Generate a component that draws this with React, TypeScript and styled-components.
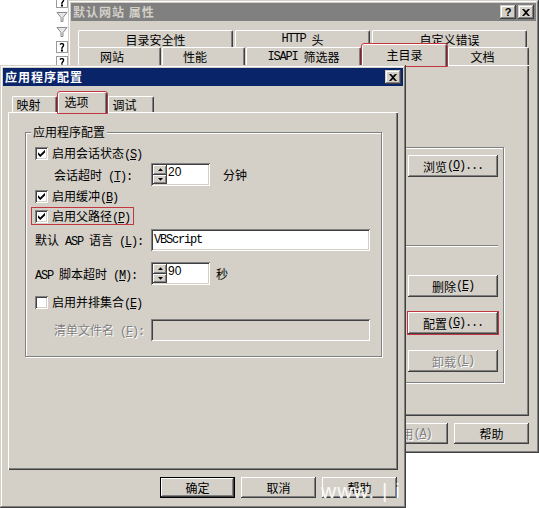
import React from "react";
import styled, { createGlobalStyle, css } from "styled-components";

const FACE = "#d4d0c8";
const RED = "#c23642";

const GlobalStyle = createGlobalStyle`
  html, body { margin: 0; padding: 0; background: #ffffff; }
  body {
    font-family: "Noto Sans CJK SC", "Liberation Sans", sans-serif;
    font-size: 12px;
    color: #000000;
  }
  u { text-decoration-thickness: 1px; text-underline-offset: 1px; }
`;

const raised = css`
  box-shadow: inset -1px -1px #404040, inset 1px 1px #ffffff, inset -2px -2px #808080;
`;
const sunken = css`
  box-shadow: inset 1px 1px #808080, inset -1px -1px #ffffff, inset 2px 2px #404040,
    inset -2px -2px ${FACE};
`;

const Desktop = styled.div`
  position: relative;
  width: 539px;
  height: 508px;
  overflow: hidden;
  background: #ffffff;
`;

const TreeStrip = styled.div`
  position: absolute;
  left: 56px;
  top: -4px;
  display: flex;
  flex-direction: column;
  gap: 3px;
`;

const Lat = styled.span`
  font-family: "Liberation Mono", "DejaVu Sans Mono", monospace;
  font-size: 12px;
  letter-spacing: -1.2px;
  white-space: pre;
`;

const Window = styled.div<{ $x: number; $y: number; $w: number; $h: number; $z: number }>`
  position: absolute;
  left: ${(p) => p.$x}px;
  top: ${(p) => p.$y}px;
  width: ${(p) => p.$w}px;
  height: ${(p) => p.$h}px;
  z-index: ${(p) => p.$z};
  box-sizing: border-box;
  padding: 3px;
  background: ${FACE};
  box-shadow: inset -1px -1px #404040, inset 1px 1px ${FACE}, inset -2px -2px #808080,
    inset 2px 2px #ffffff;
  display: flex;
  flex-direction: column;
`;

const TitleBar = styled.div<{ $active: boolean }>`
  flex: none;
  height: 18px;
  display: flex;
  align-items: center;
  gap: 2px;
  padding: 0 2px;
  background: ${(p) => (p.$active ? "#0a246a" : "#808080")};
  color: ${(p) => (p.$active ? "#ffffff" : FACE)};
  font-weight: 700;
  font-size: 12px;
`;

const TitleText = styled.span`
  flex: 1;
  white-space: nowrap;
  letter-spacing: 1px;
  line-height: 18px;
`;

const CaptionButton = styled.div`
  flex: none;
  width: 16px;
  height: 14px;
  box-sizing: border-box;
  background: ${FACE};
  box-shadow: inset -1px -1px #404040, inset 1px 1px ${FACE}, inset -2px -2px #808080,
    inset 2px 2px #ffffff;
  display: flex;
  align-items: center;
  justify-content: center;
  color: #000000;
  font-family: "Liberation Sans", sans-serif;
  font-weight: 700;
  font-size: 11px;
  line-height: 1;
`;

const TabArea = styled.div`
  flex: none;
  display: flex;
  flex-direction: column;
  padding: 9px 0 0 7px;
`;

const TabRow = styled.div<{ $h: number; $gap: number; $pl?: number }>`
  flex: none;
  height: ${(p) => p.$h}px;
  display: flex;
  align-items: flex-end;
  gap: ${(p) => p.$gap}px;
  padding-left: ${(p) => p.$pl ?? 0}px;
`;

const Tab = styled.div<{ $w: number; $h: number; $sel?: boolean; $hl?: boolean; $pr?: number }>`
  flex: none;
  box-sizing: border-box;
  width: ${(p) => p.$w}px;
  height: ${(p) => p.$h}px;
  background: ${FACE};
  border-top: 1px solid #ffffff;
  border-left: 1px solid #ffffff;
  border-right: 1px solid #404040;
  border-radius: 2px 2px 0 0;
  box-shadow: inset -1px 0 #808080;
  display: flex;
  align-items: center;
  justify-content: center;
  padding-right: ${(p) => p.$pr ?? 0}px;
  white-space: nowrap;
  ${(p) =>
    p.$sel &&
    css`
      position: relative;
      z-index: 2;
      margin-bottom: -1px;
      padding-bottom: 3px;
    `}
  ${(p) =>
    p.$hl &&
    css`
      outline: 1px solid ${RED};
    `}
`;

const Panel = styled.div<{ $h: number; $ml: number; $mr: number }>`
  flex: none;
  height: ${(p) => p.$h}px;
  margin: 0 ${(p) => p.$mr}px 0 ${(p) => p.$ml}px;
  box-sizing: border-box;
  background: ${FACE};
  box-shadow: inset 1px 1px #ffffff, inset -1px -1px #404040, inset -2px -2px #808080;
  display: flex;
  flex-direction: column;
`;

const OuterGroup = styled.div`
  margin: 82px 25px 0 10px;
  height: 236px;
  box-sizing: border-box;
  border: 1px solid #808080;
  box-shadow: 1px 1px 0 #ffffff, inset 1px 1px 0 #ffffff;
  display: flex;
  flex-direction: column;
  align-items: flex-end;
  padding: 7px 5px 0 0;
`;

const Separator = styled.div<{ $mt: number }>`
  width: 100px;
  margin-top: ${(p) => p.$mt}px;
  border-top: 1px solid #808080;
  border-bottom: 1px solid #ffffff;
`;

const Button = styled.div<{
  $w: number;
  $h: number;
  $mt?: number;
  $def?: boolean;
  $off?: boolean;
  $hl?: boolean;
}>`
  flex: none;
  box-sizing: border-box;
  width: ${(p) => p.$w}px;
  height: ${(p) => p.$h}px;
  margin-top: ${(p) => p.$mt ?? 0}px;
  background: ${FACE};
  ${(p) =>
    p.$def
      ? css`
          box-shadow: inset 0 0 0 1px #000000, inset -2px -2px #404040, inset 2px 2px #ffffff,
            inset -3px -3px #808080;
        `
      : raised}
  display: flex;
  align-items: center;
  justify-content: center;
  white-space: nowrap;
  color: ${(p) => (p.$off ? "#808080" : "#000000")};
  text-shadow: ${(p) => (p.$off ? "1px 1px 0 #ffffff" : "none")};
  ${(p) =>
    p.$hl &&
    css`
      outline: 1px solid ${RED};
    `}
`;

const ButtonRow = styled.div<{ $pr: number }>`
  flex: none;
  display: flex;
  justify-content: flex-end;
  gap: 6px;
  margin-top: 7px;
  padding-right: ${(p) => p.$pr}px;
`;

const Group = styled.div`
  position: relative;
  margin: 20px 16px 0 17px;
  border: 1px solid #808080;
  box-shadow: 1px 1px 0 #ffffff, inset 1px 1px 0 #ffffff;
  padding: 12px 0 15px 9px;
  display: flex;
  flex-direction: column;
`;

const GroupLabel = styled.span`
  position: absolute;
  top: -9px;
  left: 5px;
  padding: 0 2px;
  line-height: 16px;
  background: ${FACE};
  white-space: nowrap;
`;

const CheckRow = styled.div<{ $mt: number; $hl?: boolean }>`
  align-self: flex-start;
  display: flex;
  align-items: center;
  gap: 4px;
  height: 16px;
  margin-top: ${(p) => p.$mt}px;
  white-space: nowrap;
  ${(p) =>
    p.$hl &&
    css`
      padding: 0 3px;
      margin-left: -3px;
      outline: 1px solid ${RED};
    `}
`;

const Box = styled.span`
  flex: none;
  width: 13px;
  height: 13px;
  box-sizing: border-box;
  background: #ffffff;
  ${sunken}
  display: flex;
  align-items: center;
  justify-content: center;
`;

const FieldRow = styled.div<{ $mt: number; $h: number }>`
  display: flex;
  align-items: center;
  height: ${(p) => p.$h}px;
  margin-top: ${(p) => p.$mt}px;
`;

const FieldLabel = styled.span<{ $indent?: boolean; $off?: boolean }>`
  flex: none;
  box-sizing: border-box;
  width: 116px;
  padding-left: ${(p) => (p.$indent ? 19 : 0)}px;
  white-space: nowrap;
  color: ${(p) => (p.$off ? "#808080" : "#000000")};
  text-shadow: ${(p) => (p.$off ? "1px 1px 0 #ffffff" : "none")};
`;

const SpinBox = styled.div`
  flex: none;
  box-sizing: border-box;
  width: 59px;
  height: 23px;
  padding: 2px;
  background: #ffffff;
  ${sunken}
  display: flex;
  align-items: center;
`;

const SpinButtons = styled.div`
  flex: none;
  width: 14px;
  height: 19px;
  display: flex;
  flex-direction: column;
`;

const SpinBtn = styled.div`
  flex: 1;
  background: ${FACE};
  ${raised}
  display: flex;
  align-items: center;
  justify-content: center;
`;

const SpinValue = styled.span`
  padding-left: 1px;
  font-family: "Liberation Sans", Arial, sans-serif;
  font-size: 12px;
  align-self: flex-start;
  line-height: 15px;
`;

const Unit = styled.span<{ $ml: number }>`
  margin-left: ${(p) => p.$ml}px;
  white-space: nowrap;
`;

const TextBox = styled.div<{ $off?: boolean }>`
  flex: none;
  box-sizing: border-box;
  width: 219px;
  height: 22px;
  padding: 0 3px;
  background: ${(p) => (p.$off ? FACE : "#ffffff")};
  ${sunken}
  display: flex;
  align-items: center;
`;

const Watermark = styled.div`
  position: absolute;
  left: 321px;
  top: 479px;
  z-index: 5;
  color: rgba(255, 255, 255, 0.92);
  font-family: "Liberation Sans", Arial, sans-serif;
  font-size: 21px;
  letter-spacing: 1px;
  white-space: nowrap;
`;

const Mn = ({ k, tail = "" }: { k: string; tail?: string }) => (
  <Lat>
    (<u>{k}</u>){tail}
  </Lat>
);

const CloseGlyph = () => (
  <svg width="8" height="7" viewBox="0 0 8 7">
    <path d="M0 0h2l2 2 2-2h2L5 3.5 8 7H6L4 5 2 7H0l3-3.5z" fill="#000" />
  </svg>
);

const CheckMark = () => (
  <svg width="7" height="7" viewBox="0 0 7 7">
    <polygon points="0,2.2 2.3,4.4 7,-0.2 7,2.4 2.3,7 0,4.7" fill="#000" />
  </svg>
);

const Arrow = ({ up }: { up?: boolean }) => (
  <svg width="5" height="3" viewBox="0 0 5 3">
    <polygon points={up ? "0,3 2.5,0.3 5,3" : "0,0 2.5,2.7 5,0"} fill="#000" />
  </svg>
);

const Funnel = () => (
  <svg width="12" height="12" viewBox="0 0 12 12">
    <path d="M1 1.5h10L7 6.5v4H5v-4z" fill="#e6e6e6" stroke="#8c8c8c" strokeWidth="1" />
  </svg>
);

const PageIcon = () => (
  <svg width="12" height="12" viewBox="0 0 12 12">
    <rect x="0.5" y="0.5" width="11" height="11" fill="#ffffff" stroke="#9a9a9a" />
    <path d="M4 3.5c1-1.5 4-1 3.5 1S5.5 6 6 8" stroke="#000" strokeWidth="1.4" fill="none" />
    <rect x="5" y="8.5" width="2" height="2" fill="#000" />
  </svg>
);

const Check = ({ on }: { on?: boolean }) => <Box>{on && <CheckMark />}</Box>;

const Spinner = ({ value }: { value: string }) => (
  <SpinBox>
    <SpinButtons>
      <SpinBtn>
        <Arrow up />
      </SpinBtn>
      <SpinBtn>
        <Arrow />
      </SpinBtn>
    </SpinButtons>
    <SpinValue>{value}</SpinValue>
  </SpinBox>
);

export default function App() {
  return (
    <>
      <GlobalStyle />
      <Desktop>
        <TreeStrip>
          <PageIcon />
          <Funnel />
          <Funnel />
          <PageIcon />
          <PageIcon />
        </TreeStrip>

        <Window $x={68} $y={0} $w={471} $h={453} $z={1}>
          <TitleBar $active={false}>
            <TitleText>默认网站 属性</TitleText>
            <CaptionButton>?</CaptionButton>
            <CaptionButton>
              <CloseGlyph />
            </CaptionButton>
          </TitleBar>
          <TabArea>
            <TabRow $h={17} $gap={2}>
              <Tab $w={155} $h={17}>
                目录安全性
              </Tab>
              <Tab $w={135} $h={17}>
                <Lat>HTTP </Lat>头
              </Tab>
              <Tab $w={155} $h={17}>
                自定义错误
              </Tab>
            </TabRow>
            <TabRow $h={18} $gap={1}>
              <Tab $w={83} $h={18} $pr={15}>
                网站
              </Tab>
              <Tab $w={83} $h={18} $pr={17}>
                性能
              </Tab>
              <Tab $w={115} $h={18}>
                <Lat>ISAPI </Lat>筛选器
              </Tab>
              <Tab $w={85} $h={22} $sel $hl>
                主目录
              </Tab>
              <Tab $w={81} $h={18} $pr={12}>
                文档
              </Tab>
            </TabRow>
          </TabArea>
          <Panel $h={351} $ml={5} $mr={7}>
            <OuterGroup>
              <Button $w={90} $h={22}>
                浏览<Mn k="O" tail="..." />
              </Button>
              <Separator $mt={68} />
              <Button $w={90} $h={22} $mt={28}>
                删除<Mn k="E" />
              </Button>
              <Button $w={90} $h={22} $mt={15} $hl>
                配置<Mn k="G" tail="..." />
              </Button>
              <Button $w={90} $h={22} $mt={16} $off>
                卸载<Mn k="L" />
              </Button>
            </OuterGroup>
          </Panel>
          <ButtonRow $pr={7}>
            <Button $w={75} $h={21} $def>
              确定
            </Button>
            <Button $w={75} $h={21}>
              取消
            </Button>
            <Button $w={75} $h={21} $off>
              应用<Mn k="A" />
            </Button>
            <Button $w={75} $h={21}>
              帮助
            </Button>
          </ButtonRow>
        </Window>

        <Window $x={0} $y={65} $w={406} $h={443} $z={2}>
          <TitleBar $active>
            <TitleText>应用程序配置</TitleText>
            <CaptionButton>
              <CloseGlyph />
            </CaptionButton>
          </TitleBar>
          <TabRow $h={26} $gap={1} $pl={9}>
            <Tab $w={45} $h={16} $pr={12}>
              映射
            </Tab>
            <Tab $w={49} $h={21} $sel $hl $pr={12}>
              选项
            </Tab>
            <Tab $w={46} $h={16} $pr={13}>
              调试
            </Tab>
          </TabRow>
          <Panel $h={358} $ml={5} $mr={5}>
            <Group>
              <GroupLabel>应用程序配置</GroupLabel>
              <CheckRow $mt={0}>
                <Check on />
                <span>
                  启用会话状态<Mn k="S" />
                </span>
              </CheckRow>
              <FieldRow $mt={2} $h={23}>
                <FieldLabel $indent>
                  会话超时<Lat> </Lat>
                  <Mn k="T" tail=":" />
                </FieldLabel>
                <Spinner value="20" />
                <Unit $ml={13}>分钟</Unit>
              </FieldRow>
              <CheckRow $mt={2}>
                <Check on />
                <span>
                  启用缓冲<Mn k="B" />
                </span>
              </CheckRow>
              <CheckRow $mt={4} $hl>
                <Check on />
                <span>
                  启用父路径<Mn k="P" />
                </span>
              </CheckRow>
              <FieldRow $mt={5} $h={22}>
                <FieldLabel>
                  默认<Lat> ASP </Lat>语言<Lat> </Lat>
                  <Mn k="L" tail=":" />
                </FieldLabel>
                <TextBox>
                  <Lat>VBScript</Lat>
                </TextBox>
              </FieldRow>
              <FieldRow $mt={11} $h={23}>
                <FieldLabel>
                  <Lat>ASP </Lat>脚本超时<Lat> </Lat>
                  <Mn k="M" tail=":" />
                </FieldLabel>
                <Spinner value="90" />
                <Unit $ml={6}>秒</Unit>
              </FieldRow>
              <CheckRow $mt={9}>
                <Check />
                <span>
                  启用并排集合<Mn k="E" />
                </span>
              </CheckRow>
              <FieldRow $mt={9} $h={22}>
                <FieldLabel $indent $off>
                  清单文件名<Lat> </Lat>
                  <Mn k="F" tail=":" />
                </FieldLabel>
                <TextBox $off />
              </FieldRow>
            </Group>
          </Panel>
          <ButtonRow $pr={6}>
            <Button $w={75} $h={21} $def>
              确定
            </Button>
            <Button $w={75} $h={21}>
              取消
            </Button>
            <Button $w={75} $h={21}>
              帮助
            </Button>
          </ButtonRow>
        </Window>

        <Watermark>www. | i</Watermark>
      </Desktop>
    </>
  );
}
